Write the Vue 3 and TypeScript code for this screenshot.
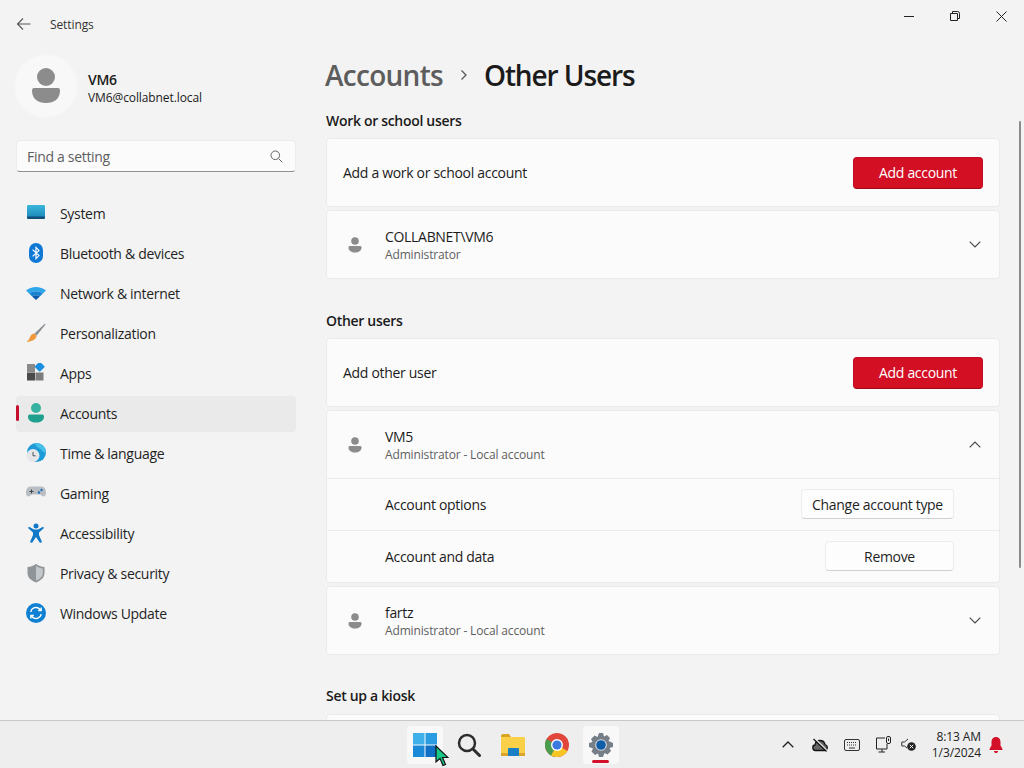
<script setup lang="ts">
interface NavItem { label: string; icon: string; active?: boolean }

const navItems: NavItem[] = [
  { label: 'System', icon: '<defs><linearGradient id="sy" x1="0" y1="0" x2="0" y2="1"><stop offset="0" stop-color="#3cb7dc"/><stop offset="1" stop-color="#1a86b8"/></linearGradient></defs><rect x="1" y="2" width="18" height="13" rx="1.2" fill="url(#sy)"/><rect x="1" y="13.500" width="18" height="2.500" rx="1" fill="#0f4f78"/>' },
  { label: 'Bluetooth & devices', icon: '<rect x="3" y="0" width="14" height="20" rx="7" fill="#0f78d4"/><path d="M6.600 6.600 13 12.600 10 15.600V4.400l3 3-6.400 6" fill="none" stroke="#fff" stroke-width="1.200"/>' },
  { label: 'Network & internet', icon: '<path d="M0 7.600C5.400 2.800 14.600 2.800 20 7.600L16.800 10.600C13 7.600 7 7.600 3.200 10.600Z" fill="#2fa6ea"/><path d="M3.200 10.600C7 7.600 13 7.600 16.800 10.600L13.800 13.400C11.500 12 8.500 12 6.200 13.400Z" fill="#1783d2"/><path d="M6.200 13.400C8.500 12 11.500 12 13.800 13.400L10 17Z" fill="#0b5aa8"/>' },
  { label: 'Personalization', icon: '<path d="M19 0.500 8.500 10.500 10.500 12.700 19.500 1.500Z" fill="#8b8f96"/><path d="M8.300 10.600 10.600 13C10 16.500 6 18.500 0.500 19 3 17 3.500 15.500 4 14 4.800 12 6.500 10.800 8.300 10.600Z" fill="#ee9a3c"/>' },
  { label: 'Apps', icon: '<g transform="translate(0 -2)"><rect x="1" y="3" width="8" height="8" fill="#8a8a8a"/><rect x="1" y="11.500" width="8" height="8" fill="#4a4a4a"/><rect x="9.500" y="11.500" width="8" height="8" fill="#7d7d7d"/><rect x="10" y="2" width="7.400" height="7.400" rx="1" transform="rotate(45 13.700 5.700)" fill="#1a8fe0"/></g>' },
  { label: 'Accounts', active: true, icon: '<circle cx="10" cy="5" r="5" fill="#36b3a0"/><path d="M2 13.500C2 12 3 11.500 4.500 11.500H15.500C17 11.500 18 12 18 13.500 18 17.500 14.500 19.500 10 19.500S2 17.500 2 13.500Z" fill="#1fa08e"/>' },
  { label: 'Time & language', icon: '<circle cx="10.500" cy="9.500" r="9.500" fill="#1d9bd6"/><path d="M10.500 0a9.500 9.500 0 0 1 9.500 9.500c-3 0-4-2-5-3s-4-2-6-5z" fill="#46c0e8"/><circle cx="7" cy="12.500" r="6.500" fill="#e4e6ea"/><path d="M7 9v3.800h2.600" fill="none" stroke="#555" stroke-width="1"/>' },
  { label: 'Gaming', icon: '<path d="M4.500 3.500h11c3 0 4.500 2.800 4.500 6.500 0 2.500-1.500 4-3 3.500-1.500-.5-2-2-3-2H6c-1 0-1.500 1.500-3 2-1.500.5-3-1-3-3.500C0 6.300 1.500 3.500 4.500 3.500Z" fill="#b9bdc4"/><path d="M3.500 8.500h4M5.500 6.500v4" stroke="#444" stroke-width="1"/><circle cx="13" cy="9.500" r="1.200" fill="#1d6fb8"/><circle cx="15.500" cy="7" r="1.200" fill="#1d6fb8"/>' },
  { label: 'Accessibility', icon: '<circle cx="10" cy="3" r="2.500" fill="#0f78c8"/><path d="M2 5 3 3.800 8 6.500H12L17 3.800 18 5 13 9.500V12L16 19 14 20 10 14 6 20 4 19 7 12V9.500Z" fill="#0f78c8"/>' },
  { label: 'Privacy & security', icon: '<path d="M10 1C13 3.200 15.500 3.800 18.500 4V10C18.500 14.500 15 17.500 10 19.500 5 17.500 1.500 14.500 1.500 10V4C4.500 3.800 7 3.200 10 1Z" fill="#8f9499"/><path d="M10 3C12.500 4.700 14.700 5.300 16.800 5.500V10C16.800 13.500 14 16 10 17.700Z" fill="#c4c8cb"/>' },
  { label: 'Windows Update', icon: '<circle cx="10" cy="10" r="10" fill="#0f80d2"/><path d="M4.800 9A5.300 5.300 0 0 1 14 6.300L15.200 7.500M15.200 4.500V7.500H12.200M15.200 11A5.300 5.300 0 0 1 6 13.700L4.800 12.500M4.800 15.500V12.500H7.800" fill="none" stroke="#fff" stroke-width="1.300"/>' }
]

interface Person { name: string; sub: string }
const domainUser: Person = { name: 'COLLABNET\\VM6', sub: 'Administrator' }
const expanded: Person = { name: 'VM5', sub: 'Administrator - Local account' }
const fartz: Person = { name: 'fartz', sub: 'Administrator - Local account' }
</script>

<template>
  <div class="screen">
    <div class="window">
      <aside class="sidebar">
        <div class="appbar">
          <svg class="back" width="16" height="14" viewBox="0 0 16 14"><path d="M14.500 7H1.500M7 1.500 1.500 7 7 12.500" fill="none" stroke="#555" stroke-width="1.100"/></svg>
          <span class="apptitle">Settings</span>
        </div>
        <div class="profile">
          <div class="avatar">
            <svg width="30" height="36" viewBox="0 0 30 36"><circle cx="15" cy="9" r="9" fill="#8c8c8c"/><path d="M1 22.500C1 20.500 2 20 4 20H26C28 20 29 20.500 29 22.500 29 31 23 35 15 35S1 31 1 22.500Z" fill="#8c8c8c"/></svg>
          </div>
          <div class="who">
            <div class="who-name">VM6</div>
            <div class="who-mail">VM6@collabnet.local</div>
          </div>
        </div>
        <div class="search">
          <span>Find a setting</span>
          <svg width="13" height="13" viewBox="0 0 13 13"><circle cx="5.300" cy="5.300" r="4.300" fill="none" stroke="#666" stroke-width="1"/><path d="M8.500 8.500 12.300 12.300" stroke="#666" stroke-width="1"/></svg>
        </div>
        <nav class="nav">
          <div v-for="item in navItems" :key="item.label" class="nav-item" :class="{ active: item.active }">
            <span v-if="item.active" class="pill"></span>
            <svg class="nav-icon" width="20" height="20" viewBox="0 0 20 20" v-html="item.icon"></svg>
            <span>{{ item.label }}</span>
          </div>
        </nav>
      </aside>

      <main class="content">
        <div class="caption">
          <svg width="10" height="1" viewBox="0 0 10 1"><rect width="10" height="1" fill="#222"/></svg>
          <svg width="10" height="10" viewBox="0 0 10 10"><path d="M.5 2.500h7v7h-7zM2.500 2.500V.5h5a2 2 0 0 1 2 2v5h-2" fill="none" stroke="#222"/></svg>
          <svg width="11" height="11" viewBox="0 0 11 11"><path d="M.5.5l10 10M10.500.5l-10 10" stroke="#222" stroke-width="1"/></svg>
        </div>
        <h1 class="crumbs">
          <span class="crumb-parent">Accounts</span>
          <svg width="8" height="12" viewBox="0 0 8 12"><path d="M1.500 1.500 6 6 1.500 10.500" fill="none" stroke="#555" stroke-width="1.300"/></svg>
          <span class="crumb-current">Other Users</span>
        </h1>

        <h2 class="section first">Work or school users</h2>
        <div class="card row">
          <span>Add a work or school account</span>
          <button class="btn primary">Add account</button>
        </div>
        <div class="card row gap">
          <div class="person">
            <svg class="person-icon" width="14" height="16" viewBox="0 0 14 16"><circle cx="7" cy="4" r="3.800" fill="#8c8c8c"/><path d="M.5 10.500C.5 9.500 1 9 2 9H12C13 9 13.500 9.500 13.500 10.500 13.500 14 10.500 15.500 7 15.500S.5 14 .5 10.500Z" fill="#8c8c8c"/></svg>
            <div class="person-text">
              <div class="person-name">{{ domainUser.name }}</div>
              <div class="person-sub">{{ domainUser.sub }}</div>
            </div>
          </div>
          <svg class="chev" width="12" height="7" viewBox="0 0 12 7"><path d="M.7.7 6 6 11.300.7" fill="none" stroke="#444" stroke-width="1.100"/></svg>
        </div>

        <h2 class="section">Other users</h2>
        <div class="card row">
          <span>Add other user</span>
          <button class="btn primary">Add account</button>
        </div>
        <div class="card gap">
          <div class="row inner-head">
            <div class="person">
              <svg class="person-icon" width="14" height="16" viewBox="0 0 14 16"><circle cx="7" cy="4" r="3.800" fill="#8c8c8c"/><path d="M.5 10.500C.5 9.500 1 9 2 9H12C13 9 13.500 9.500 13.500 10.500 13.500 14 10.500 15.500 7 15.500S.5 14 .5 10.500Z" fill="#8c8c8c"/></svg>
              <div class="person-text">
                <div class="person-name">{{ expanded.name }}</div>
                <div class="person-sub">{{ expanded.sub }}</div>
              </div>
            </div>
            <svg class="chev" width="12" height="7" viewBox="0 0 12 7"><path d="M.7 6.300 6 1 11.300 6.300" fill="none" stroke="#444" stroke-width="1.100"/></svg>
          </div>
          <div class="sub-row">
            <span>Account options</span>
            <button class="btn plain">Change account type</button>
          </div>
          <div class="sub-row">
            <span>Account and data</span>
            <button class="btn plain remove">Remove</button>
          </div>
        </div>
        <div class="card row gap">
          <div class="person">
            <svg class="person-icon" width="14" height="16" viewBox="0 0 14 16"><circle cx="7" cy="4" r="3.800" fill="#8c8c8c"/><path d="M.5 10.500C.5 9.500 1 9 2 9H12C13 9 13.500 9.500 13.500 10.500 13.500 14 10.500 15.500 7 15.500S.5 14 .5 10.500Z" fill="#8c8c8c"/></svg>
            <div class="person-text">
              <div class="person-name">{{ fartz.name }}</div>
              <div class="person-sub">{{ fartz.sub }}</div>
            </div>
          </div>
          <svg class="chev" width="12" height="7" viewBox="0 0 12 7"><path d="M.7.7 6 6 11.300.7" fill="none" stroke="#444" stroke-width="1.100"/></svg>
        </div>

        <h2 class="section kiosk">Set up a kiosk</h2>
        <div class="card row"></div>
        <div class="scrollbar"></div>
      </main>
    </div>

    <footer class="taskbar">
      <div class="task-icons">
        <div class="task hi">
          <svg width="24" height="24" viewBox="0 0 24 24"><rect x="0" y="0" width="11.500" height="11.500" fill="#3fb0ea"/><rect x="12.500" y="0" width="11.500" height="11.500" fill="#2a9de2"/><rect x="0" y="12.500" width="11.500" height="11.500" fill="#1a8ad8"/><rect x="12.500" y="12.500" width="11.500" height="11.500" fill="#0f6fc4"/></svg>
        </div>
        <div class="task">
          <svg width="24" height="24" viewBox="0 0 24 24"><circle cx="10" cy="10" r="8" fill="none" stroke="#2d2d2d" stroke-width="2.500"/><path d="M16 16 22.500 22.500" stroke="#2d2d2d" stroke-width="3" stroke-linecap="round"/></svg>
        </div>
        <div class="task">
          <svg width="24" height="22" viewBox="0 0 24 22"><path d="M0 2C0 1 1 0 2 0H8L10 3H0Z" fill="#d9a520"/><rect x="0" y="3" width="24" height="19" rx="1" fill="#f9d048"/><rect x="0" y="19" width="24" height="3" fill="#d9a52a"/><rect x="7" y="14" width="11" height="8" rx="1" fill="#1b7fc6"/></svg>
        </div>
        <div class="task">
          <svg width="24" height="24" viewBox="0 0 24 24"><circle cx="12" cy="12" r="12" fill="#e0473a"/><path d="M12 12 22.400 18A12 12 0 0 1 1.600 18Z" fill="#4a9d4d" transform="rotate(60 12 12)"/><path d="M12 12 22.400 18A12 12 0 0 1 6 22.400Z" fill="#f8c624"/><circle cx="12" cy="12" r="6" fill="#fff"/><circle cx="12" cy="12" r="4.600" fill="#3b78e0"/></svg>
        </div>
        <div class="task hi">
          <svg width="24" height="24" viewBox="0 0 24 24"><path d="M10 0H14L15 3.500 18 2 21 5 19.500 8 24 10V14L20.500 15 22 18 18.500 21.500 15.500 20 14 24H10L9 20.500 6 22 2.500 18.500 4 15.500 0 14V10L3.500 9 2 6 5.500 2.500 8.500 4Z" fill="#767f88"/><circle cx="12" cy="12" r="5.800" fill="#dfe3e6"/><circle cx="12" cy="12" r="4.800" fill="#0f5ca8"/></svg>
          <span class="running"></span>
        </div>
        <svg class="cursor" width="14" height="22" viewBox="0 0 14 22"><path d="M1 1V17L5 13.500 8 20.500 10.500 19.500 7.500 12.500H13Z" fill="#18c98a" stroke="#111" stroke-width="1.200"/></svg>
      </div>
      <div class="tray">
        <svg class="t1" width="12" height="7" viewBox="0 0 12 7"><path d="M.7 6.300 6 1 11.300 6.300" fill="none" stroke="#222" stroke-width="1.300"/></svg>
        <svg class="t2" width="16" height="14" viewBox="0 0 16 14"><path d="M3.500 12.500C1.500 12.500 .8 11 .8 9.500.8 8 2 7 3 7 3.500 4 6 2.500 8 2.500 11 2.500 12.500 4.500 13 6.500 14.500 7 15.300 8 15.300 9.500 15.300 11 14 12.500 12 12.500Z" fill="#666" stroke="#111" stroke-width="1.300"/><path d="M2.800 .6 15 12.500" stroke="#eee" stroke-width="1.500"/><path d="M1.500 1 14.500 13.500" stroke="#111" stroke-width="1.200"/></svg>
        <svg class="t3" width="16" height="12" viewBox="0 0 16 12"><rect x=".5" y=".5" width="15" height="11" rx="1.500" fill="none" stroke="#333"/><path d="M3 3.500h10M3 6h10" stroke="#333" stroke-dasharray="1 1"/><path d="M5 9h6" stroke="#333"/></svg>
        <svg class="t4" width="17" height="17" viewBox="0 0 17 17"><path d="M10 2H1.500V13H12V8M7 13V16M3.500 16H10" fill="none" stroke="#222"/><rect x="11.500" y=".5" width="4" height="7" rx="1.500" fill="none" stroke="#222"/><path d="M13.500 2.500V5" stroke="#222"/></svg>
        <svg class="t5" width="15" height="13" viewBox="0 0 15 13"><path d="M7 1 3.500 4H.8V8H3.500L6 10" fill="none" stroke="#333"/><circle cx="10.500" cy="8.500" r="4.300" fill="#222"/><path d="M8.800 6.800 12.200 10.200M12.200 6.800 8.800 10.200" stroke="#fff"/></svg>
        <div class="clock">
          <div>8:13 AM</div>
          <div>1/3/2024</div>
        </div>
        <svg class="bell" width="14" height="16" viewBox="0 0 14 16"><path d="M7 0C4 0 2.500 2.500 2.500 5V8.500L.5 12V13H13.500V12L11.500 8.500V5C11.500 2.500 10 0 7 0Z" fill="#d3122a"/><path d="M5 14H9C9 15.500 8 16 7 16S5 15.500 5 14Z" fill="#d3122a"/></svg>
      </div>
    </footer>
  </div>
</template>

<style scoped>
.screen {
  width: 1024px;
  height: 768px;
  display: flex;
  flex-direction: column;
  overflow: hidden;
  background: #f3f3f3;
  color: #1b1b1b;
  font-family: "Open Sans", "Noto Sans", sans-serif;
  font-size: 14px;
  letter-spacing: -0.31px;
}
.window { flex: 0 0 720px; height: 720px; display: flex; overflow: hidden; }
.sidebar { width: 326px; flex: none; padding: 0 30px 0 16px; box-sizing: border-box; }
.appbar { height: 48px; display: flex; align-items: center; font-size: 12px; }
.back { margin-right: 18px; }
.apptitle { color: #333; letter-spacing: -0.1px; }
.profile { height: 60px; margin-top: 8px; display: flex; align-items: center; }
.avatar {
  width: 60px; height: 60px; border-radius: 50%; background: #f8f8f8;
  display: flex; align-items: center; justify-content: center; flex: none;
  box-shadow: 0 0 4px rgba(255,255,255,.8);
}
.who { margin: 6px 0 0 12px; }
.who-name { font-weight: 600; line-height: 18px; }
.who-mail { font-size: 12px; line-height: 18px; letter-spacing: -0.1px; }
.search {
  margin-top: 24px; height: 32px; box-sizing: border-box; padding: 0 12px 0 10px;
  display: flex; align-items: center; justify-content: space-between;
  background: #fbfbfb; border: 1px solid #ebebeb; border-bottom: 1px solid #8f8f8f; border-radius: 4px;
  color: #5e5e5e;
}
.nav { margin-top: 24px; display: flex; flex-direction: column; gap: 4px; }
.nav-item {
  position: relative; height: 36px; display: flex; align-items: center; box-sizing: border-box;
  padding: 0 0 2px 10px; border-radius: 4px; color: #1f1f1f;
}
.nav-item.active { background: #eaeaea; }
.nav-icon { margin-right: 14px; flex: none; }
.pill { position: absolute; left: 0; top: 9px; width: 3px; height: 16px; border-radius: 2px; background: #c50f2f; }
.content { position: relative; flex: 1; min-width: 0; padding-right: 24px; }
.caption {
  position: absolute; top: 0; right: 17px; height: 32px; display: flex; align-items: center; gap: 36px;
}
.crumbs {
  margin: 0 0 0 -1px; height: 56px; padding-top: 47px; display: flex; align-items: center;
  font-weight: 600; font-size: 28px; box-sizing: content-box;
}
.crumb-parent { color: #5d5d5d; letter-spacing: -0.72px; }
.crumb-current { letter-spacing: -1.1px; }
.crumbs svg { margin: 0 16px 0 17px; }
.section { margin: 32px 0 7px; font-size: 14px; font-weight: 600; line-height: 20px; height: 20px; }
.section.first { margin-top: 8px; }
.section.kiosk { margin-top: 31px; margin-bottom: 8px; }
.card {
  background: #fbfbfb; border: 1px solid #ebebeb; border-radius: 4px; box-sizing: border-box;
}
.row {
  height: 69px; display: flex; align-items: center; justify-content: space-between; padding: 0 16px;
}
.card.gap { margin-top: 3px; }
.inner-head { height: 67px; }
.person { display: flex; align-items: center; }
.person-text { padding-top: 2px; }
.person-icon { margin-left: 5px; margin-right: 23px; flex: none; }
.person-name { line-height: 18px; }
.person-sub { font-size: 12px; line-height: 18px; color: #5f5f5f; letter-spacing: -0.15px; }
.chev { margin-right: 2px; }
.sub-row {
  height: 52px; display: flex; align-items: center; justify-content: space-between;
  border-top: 1px solid #ececec; padding: 0 45px 0 58px; box-sizing: border-box;
}
.sub-row .btn { margin-top: -1px; }
.btn {
  font: inherit; letter-spacing: inherit; border-radius: 4px; box-sizing: border-box; cursor: default;
}
.primary {
  width: 130px; height: 32px; background: #d30f24; color: #fff; border: 1px solid #c40c20;
  border-bottom-color: #9a0a18;
}
.plain {
  width: 153px; height: 30px; background: #fdfdfd; color: #1f1f1f; border: 1px solid #ececec;
  border-bottom-color: #d0d0d0; padding: 0;
}
.remove { width: 129px; }
.scrollbar {
  position: absolute; right: 3px; top: 121px; width: 2px; height: 447px; border-radius: 1px; background: #8a8a8a;
}
.taskbar {
  flex: 1; display: flex; position: relative; background: #eeeeee; border-top: 1px solid #c8c8c8; box-sizing: border-box;
}
.task-icons {
  position: absolute; left: 403px; top: 0; bottom: 0; display: flex; align-items: center; gap: 0;
}
.task { width: 44px; height: 47px; display: flex; align-items: center; justify-content: center; position: relative; }
.task.hi::before {
  content: ""; position: absolute; left: 4px; right: 4px; top: 5px; bottom: 4px; background: #f8f8f8; border-radius: 4px;
}
.task svg { position: relative; }
.running {
  position: absolute; left: 13px; bottom: 5px; width: 17px; height: 3px; border-radius: 2px; background: #d3122a;
}
.cursor { position: absolute; left: 32px; top: 24px; }
.tray { position: absolute; right: 0; top: 0; bottom: 0; display: flex; align-items: center; }
.t1 { margin-right: 18px; }
.t2 { margin-right: 16px; }
.t3 { margin-right: 15px; }
.t4 { margin-right: 9px; }
.t5 { margin-right: 16px; }
.clock { font-size: 12px; line-height: 16px; text-align: right; color: #222; letter-spacing: -0.1px; margin-right: 8px; }
.bell { margin-right: 21px; }
</style>
